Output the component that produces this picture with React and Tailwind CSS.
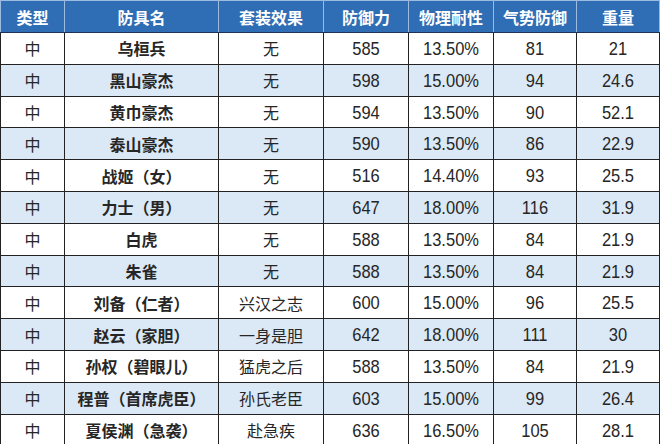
import React from 'react';

const COLUMNS = [
  { label: '类型', width: 'w-[64px]' },
  { label: '防具名', width: 'w-[154px]' },
  { label: '套装效果', width: 'w-[105px]' },
  { label: '防御力', width: 'w-[85px]' },
  { label: '物理耐性', width: 'w-[85px]' },
  { label: '气势防御', width: 'w-[83px]' },
  { label: '重量', width: 'w-[83px]' },
];

const ROWS = [
  ['中', '乌桓兵', '无', '585', '13.50%', '81', '21'],
  ['中', '黑山豪杰', '无', '598', '15.00%', '94', '24.6'],
  ['中', '黄巾豪杰', '无', '594', '13.50%', '90', '52.1'],
  ['中', '泰山豪杰', '无', '590', '13.50%', '86', '22.9'],
  ['中', '战姬（女）', '无', '516', '14.40%', '93', '25.5'],
  ['中', '力士（男）', '无', '647', '18.00%', '116', '31.9'],
  ['中', '白虎', '无', '588', '13.50%', '84', '21.9'],
  ['中', '朱雀', '无', '588', '13.50%', '84', '21.9'],
  ['中', '刘备（仁者）', '兴汉之志', '600', '15.00%', '96', '25.5'],
  ['中', '赵云（家胆）', '一身是胆', '642', '18.00%', '111', '30'],
  ['中', '孙权（碧眼儿）', '猛虎之后', '588', '13.50%', '84', '21.9'],
  ['中', '程普（首席虎臣）', '孙氏老臣', '603', '15.00%', '99', '26.4'],
  ['中', '夏侯渊（急袭）', '赴急疾', '636', '16.50%', '105', '28.1'],
];

export default function App() {
  return (
    <div className="w-[661px] h-[444px] overflow-hidden bg-white font-['Liberation_Sans','Noto_Sans_CJK_SC',sans-serif]">
      <table className="table-fixed border-collapse w-[660px]">
        <thead>
          <tr className="h-[32px] bg-[#2f6db4]">
            {COLUMNS.map((c) => (
              <th
                key={c.label}
                className={`${c.width} border border-[#9dbbe0] border-b-[#1c3556] p-0 text-center text-[16px] font-bold text-white font-['Noto_Sans_CJK_SC',sans-serif]`}
              >
                {c.label}
              </th>
            ))}
          </tr>
        </thead>
        <tbody>
          {ROWS.map((r, i) => (
            <tr key={r[1]} className={`h-[31.8px] ${i % 2 ? 'bg-[#dbe8f5]' : 'bg-white'}`}>
              {r.map((v, j) => (
                <td
                  key={j}
                  className={`border border-[#222] p-0 text-center text-[#262626] ${
                    j === 1
                      ? "font-bold text-[16px] font-['Noto_Sans_CJK_SC',sans-serif]"
                      : j >= 3
                      ? 'text-[16.5px]'
                      : "text-[16px] font-['Noto_Sans_CJK_SC',sans-serif]"
                  }`}
                >
                  {j >= 3 ? <span className="inline-block scale-y-[1.12]">{v}</span> : v}
                </td>
              ))}
            </tr>
          ))}
        </tbody>
      </table>
    </div>
  );
}
